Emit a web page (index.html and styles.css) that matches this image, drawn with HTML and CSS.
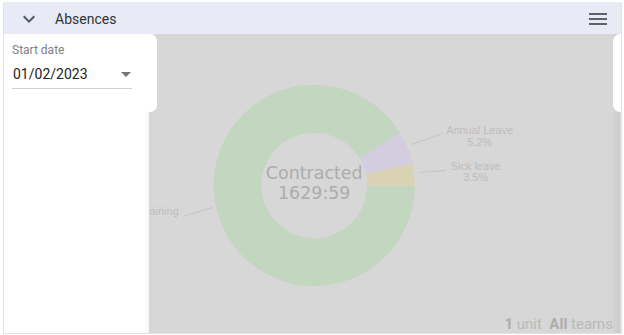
FILE: index.html
```html
<!DOCTYPE html>
<html>
<head>
<meta charset="utf-8">
<link rel="stylesheet" href="styles.css">
</head>
<body>
<div class="frame">
  <header class="header">
    <svg class="icon chevron" viewBox="0 0 24 24" width="24" height="24"><path d="M16.59 8.59L12 13.17 7.41 8.59 6 10l6 6 6-6z"/></svg>
    <span class="title">Absences</span>
    <svg class="icon menu" viewBox="0 0 24 24" width="24" height="24"><path d="M3 18h18v-2H3v2zm0-5h18v-2H3v2zm0-7v2h18V6H3z"/></svg>
  </header>
  <div class="content">
    <aside class="sidebar"></aside>
    <main class="main">
      <div class="chart-area">
        <svg class="chart" width="463" height="282" viewBox="0 0 463 282">
          <path class="seg-green" d="M 266 152 A 101 101 0 1 1 251.3 99.5 L 210.3 124.5 A 53 53 0 1 0 218 152 Z"/>
          <path class="seg-purple" d="M 251.3 99.5 A 101 101 0 0 1 263.6 130 L 216.7 140.4 A 53 53 0 0 0 210.3 124.5 Z"/>
          <path class="seg-yellow" d="M 263.6 130 A 101 101 0 0 1 266 152 L 218 152 A 53 53 0 0 0 216.7 140.4 Z"/>
          <line class="leader" x1="263" y1="111" x2="293" y2="100"/>
          <line class="leader" x1="270" y1="139" x2="297" y2="137"/>
          <line class="leader" x1="34" y1="183" x2="63" y2="174"/>
          <text class="lbl" x="331" y="100">Annual Leave</text>
          <text class="lbl" x="331" y="112">5.2%</text>
          <text class="lbl" x="327" y="136">Sick leave</text>
          <text class="lbl" x="327" y="148">3.5%</text>
          <text class="lbl end" x="29" y="182">Remaining</text>
          <text class="center" x="165" y="146">Contracted</text>
          <text class="center" x="165" y="166">1629:59</text>
        </svg>
        <div class="footer"><b>1</b> unit&nbsp;&nbsp;<b>All</b> teams</div>
      </div>
      <div class="edge"></div>
    </main>
    <div class="filter-card">
      <div class="field-label">Start date</div>
      <div class="field">
        <span class="field-value">01/02/2023</span>
        <span class="caret"></span>
      </div>
    </div>
    <div class="right-card"></div>
  </div>
</div>
</body>
</html>
```

FILE: styles.css
```css
* { box-sizing: border-box; }
html, body { margin: 0; padding: 0; background: #fff; }
body { font-family: Roboto, "Liberation Sans", Arial, sans-serif; }

.frame {
  margin: 2px 0 0 3px;
  width: 619px;
  height: 332px;
  border: 1px solid #e2e2e2;
  border-top-color: #e8eaf6;
  display: flex;
  flex-direction: column;
}

.header {
  height: 31px;
  flex: none;
  background: #e8eaf6;
  display: flex;
  align-items: center;
  padding: 0 11px 0 13px;
}
.icon { display: block; flex: none; }
.chevron { fill: #505868; }
.menu { fill: #5f6368; margin-left: auto; }
.title {
  margin-left: 14px;
  font-size: 14px;
  color: #333;
}

.content {
  flex: 1;
  display: flex;
  position: relative;
  min-height: 0;
}

.sidebar {
  width: 145px;
  flex: none;
  background: #fff;
  box-shadow: inset -4px 0 4px -3px rgba(0,0,0,0.06);
}

.main {
  flex: 1;
  display: flex;
  background: #d7d7d7;
  min-width: 0;
}
.chart-area {
  flex: 1;
  display: flex;
  flex-direction: column;
  min-width: 0;
}
.chart { display: block; overflow: hidden; }
.seg-green { fill: #c3d6bf; }
.seg-purple { fill: #d4cde0; }
.seg-yellow { fill: #d9d3b3; }
.leader { stroke: #c4c4c4; stroke-width: 1; }
.lbl {
  font-family: "Liberation Sans", Arial, sans-serif;
  font-size: 11px;
  fill: #bdbdbd;
  text-anchor: middle;
}
.lbl.end { text-anchor: end; }
.center {
  font-family: "DejaVu Sans", sans-serif;
  font-size: 17.5px;
  fill: #acacac;
  text-anchor: middle;
}
.footer {
  height: 18px;
  line-height: 18px;
  text-align: right;
  font-size: 15px;
  color: #b9b9b9;
  padding-right: 0;
}
.footer b { color: #adadad; font-weight: 700; }

.edge {
  width: 8px;
  flex: none;
  background: linear-gradient(to right, #d2d2d2, #cdcdcd);
  border-right: 1px solid #dcdcdc;
}

.filter-card {
  position: absolute;
  left: 0;
  top: 0;
  width: 153px;
  height: 78px;
  background: #fff;
  border-radius: 0 7px 7px 0;
  padding: 9px 0 0 8px;
}
.field-label {
  font-size: 12px;
  line-height: 14px;
  color: #808080;
}
.field {
  margin-top: 7px;
  width: 120px;
  height: 25px;
  border-bottom: 1px solid #cfcfcf;
  display: flex;
  align-items: flex-start;
  padding-left: 1px;
}
.field-value {
  font-size: 14px;
  line-height: 20px;
  color: #222;
}
.caret {
  margin-left: auto;
  margin-right: 1px;
  margin-top: 8px;
  width: 0;
  height: 0;
  border-left: 5px solid transparent;
  border-right: 5px solid transparent;
  border-top: 5px solid #757575;
}

.right-card {
  position: absolute;
  right: 0;
  top: 0;
  width: 8px;
  height: 78px;
  background: #fff;
  border-radius: 7px 0 0 7px;
}
```
